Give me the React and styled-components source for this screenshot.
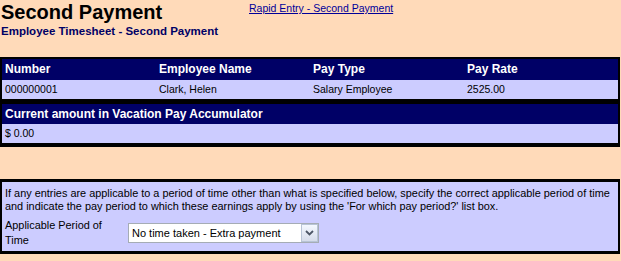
import styled, { createGlobalStyle } from 'styled-components';

const GlobalStyle = createGlobalStyle`
  html, body {
    margin: 0;
    padding: 0;
    background: #ffdab9;
    font-family: "Liberation Sans", Arial, sans-serif;
  }
`;

const Page = styled.div`
  width: 621px;
  height: 261px;
  background: #ffdab9;
  overflow: hidden;
`;

const HeaderBar = styled.header`
  display: flex;
  align-items: flex-start;
  height: 57px;
`;

const TitleBlock = styled.div`
  width: 248px;
  padding-left: 1px;
`;

const Title = styled.h1`
  margin: 0;
  font-size: 20px;
  line-height: 25px;
  font-weight: 700;
  color: #000;
`;

const Subtitle = styled.h2`
  margin: 0;
  font-size: 11.5px;
  line-height: 13px;
  font-weight: 700;
  color: #000066;
`;

const TopLink = styled.a`
  margin-top: 2px;
  font-size: 10.5px;
  line-height: 13px;
  color: #000099;
  text-decoration: underline;
  cursor: pointer;
`;

const Panel = styled.section`
  width: 620px;
  box-sizing: border-box;
  border: 2px solid #000;
  border-top-width: ${({ $top }) => $top || 2}px;
  border-bottom-width: ${({ $bottom }) => $bottom || 2}px;
  background: #ccccff;
  margin-top: ${({ $gap }) => $gap || 0}px;
`;

const Grid = styled.div`
  display: grid;
  grid-template-columns: ${({ $cols }) => `repeat(${$cols}, 1fr)`};
`;

const HeadCell = styled.div`
  background: #000066;
  color: #fff;
  font-size: 12px;
  font-weight: 700;
  height: ${({ $h }) => $h || 20}px;
  line-height: ${({ $h }) => $h || 20}px;
  padding-left: 3px;
  white-space: nowrap;
`;

const ValueCell = styled.div`
  color: #000;
  font-size: 10.5px;
  height: 19px;
  line-height: 19px;
  padding-left: 3px;
  white-space: nowrap;
`;

const Notice = styled.div`
  padding: 5px 0 3px 3px;
  color: #000;
  font-size: 10.9px;
`;

const NoticeText = styled.p`
  margin: 0;
  line-height: 13px;
`;

const FieldRow = styled.div`
  display: flex;
  align-items: center;
  margin-top: 5px;
`;

const FieldLabel = styled.label`
  width: 123px;
  padding-right: 18px;
  box-sizing: border-box;
  line-height: 15px;
`;

const SelectBox = styled.div`
  display: flex;
  align-items: stretch;
  width: 191px;
  height: 20px;
  box-sizing: border-box;
  border: 1px solid #a5acb5;
  background: #fff;
`;

const Select = styled.select`
  flex: 1;
  appearance: none;
  border: none;
  outline: none;
  background: transparent;
  font-family: "Liberation Sans", Arial, sans-serif;
  font-size: 11px;
  color: #000;
  padding: 0 0 0 3px;
  margin: 0;
`;

const DropButton = styled.span`
  width: 17px;
  box-sizing: border-box;
  border: 1px solid #b8c4d6;
  background: linear-gradient(180deg, #f4f8ff 0%, #d6dcea 100%);
  display: flex;
  align-items: center;
  justify-content: center;
`;

const Chevron = () => (
  <svg width="9" height="6" viewBox="0 0 9 6">
    <path d="M1 1 L4.5 4.5 L8 1" fill="none" stroke="#4d5666" strokeWidth="1.8" />
  </svg>
);

const employee = {
  number: '000000001',
  name: 'Clark, Helen',
  payType: 'Salary Employee',
  payRate: '2525.00',
};

export default function App() {
  return (
    <Page>
      <GlobalStyle />
      <HeaderBar>
        <TitleBlock>
          <Title>Second Payment</Title>
          <Subtitle>Employee Timesheet - Second Payment</Subtitle>
        </TitleBlock>
        <TopLink>Rapid Entry - Second Payment</TopLink>
      </HeaderBar>

      <Panel>
        <Grid $cols={4}>
          <HeadCell $h={21}>Number</HeadCell>
          <HeadCell $h={21}>Employee Name</HeadCell>
          <HeadCell $h={21}>Pay Type</HeadCell>
          <HeadCell $h={21}>Pay Rate</HeadCell>
          <ValueCell>{employee.number}</ValueCell>
          <ValueCell>{employee.name}</ValueCell>
          <ValueCell>{employee.payType}</ValueCell>
          <ValueCell>{employee.payRate}</ValueCell>
        </Grid>
      </Panel>

      <Panel $top={3} $bottom={4}>
        <Grid $cols={1}>
          <HeadCell>Current amount in Vacation Pay Accumulator</HeadCell>
          <ValueCell>$ 0.00</ValueCell>
        </Grid>
      </Panel>

      <Panel $gap={32} $top={3} $bottom={3}>
        <Notice>
          <NoticeText>
            If any entries are applicable to a period of time other than what is specified below, specify the correct applicable period of time
            and indicate the pay period to which these earnings apply by using the 'For which pay period?' list box.
          </NoticeText>
          <FieldRow>
            <FieldLabel htmlFor="period">Applicable Period of Time</FieldLabel>
            <SelectBox>
              <Select id="period" defaultValue="none">
                <option value="none">No time taken - Extra payment</option>
              </Select>
              <DropButton>
                <Chevron />
              </DropButton>
            </SelectBox>
          </FieldRow>
        </Notice>
      </Panel>
    </Page>
  );
}
